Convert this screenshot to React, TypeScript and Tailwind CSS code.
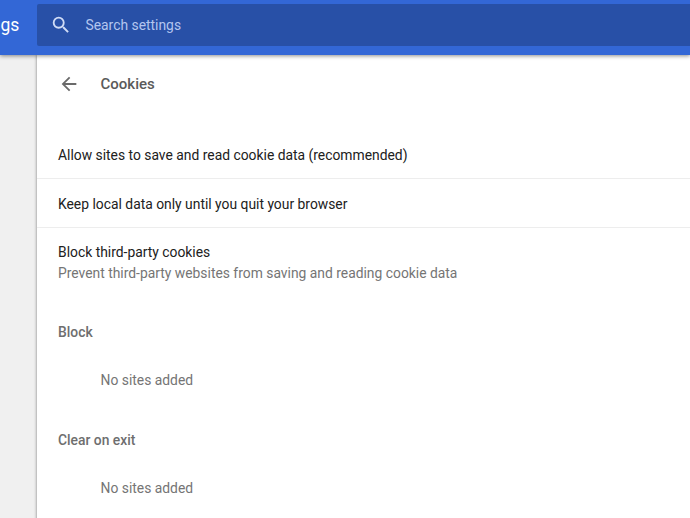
import { MdArrowBack, MdSearch } from 'react-icons/md';

const options = [
  { label: 'Allow sites to save and read cookie data (recommended)' },
  { label: 'Keep local data only until you quit your browser' },
  {
    label: 'Block third-party cookies',
    description: 'Prevent third-party websites from saving and reading cookie data',
  },
];

const siteLists = ['Block', 'Clear on exit'];

function Toolbar() {
  return (
    <header className="relative z-10 flex h-[55px] shrink-0 bg-[#3367d6] shadow-[0_1px_4px_rgba(0,0,0,0.45)]">
      <div className="flex h-[50px] w-[37px] shrink-0 items-center pl-[0.5px] text-[17.5px] text-white">
        <h1>gs</h1>
      </div>
      <div className="mt-1 flex h-[42px] flex-1 items-center rounded-l-xs bg-[#2850a7] pl-[12.5px] text-[#b4c6ef]">
        <MdSearch className="size-[22px] text-[#d0dcf6]" />
        <span className="ml-[14px] text-[13.86px]">Search settings</span>
      </div>
    </header>
  );
}

function SiteList({ title }: { title: string }) {
  return (
    <section className="h-[108px]">
      <h3 className="pl-[21px] leading-[20px] font-medium text-[#6e6e6e]">{title}</h3>
      <p className="mt-7 pl-[63.5px] leading-[20px] text-[#757575]">No sites added</p>
    </section>
  );
}

export default function App() {
  return (
    <div className="flex h-[518px] w-[690px] flex-col overflow-hidden bg-[#f0f0f0] font-['Roboto',sans-serif] text-[13.86px]">
      <Toolbar />
      <main className="ml-[37px] flex-1 bg-white shadow-[0_0_3px_rgba(0,0,0,0.5)]">
        <div className="flex h-[58px] items-center pl-[21px]">
          <button aria-label="Back">
            <MdArrowBack className="size-[22px] text-[#6a6a6a]" />
          </button>
          <h2 className="ml-[20.5px] text-[15px] font-medium text-[#5a5a5a]">Cookies</h2>
        </div>
        <div className="mt-[17px]">
          {options.map((option) => (
            <div
              key={option.label}
              className="flex min-h-[49px] flex-col justify-center border-b border-[#ededed] pt-px pl-[21px] leading-[20px] text-[#212121] last:h-[74px] last:justify-start last:border-0 last:pt-[14px]"
            >
              <span>{option.label}</span>
              {option.description && <span className="mt-px text-[#757575]">{option.description}</span>}
            </div>
          ))}
        </div>
        <div className="mt-[20px]">
          {siteLists.map((title) => (
            <SiteList key={title} title={title} />
          ))}
        </div>
      </main>
    </div>
  );
}
